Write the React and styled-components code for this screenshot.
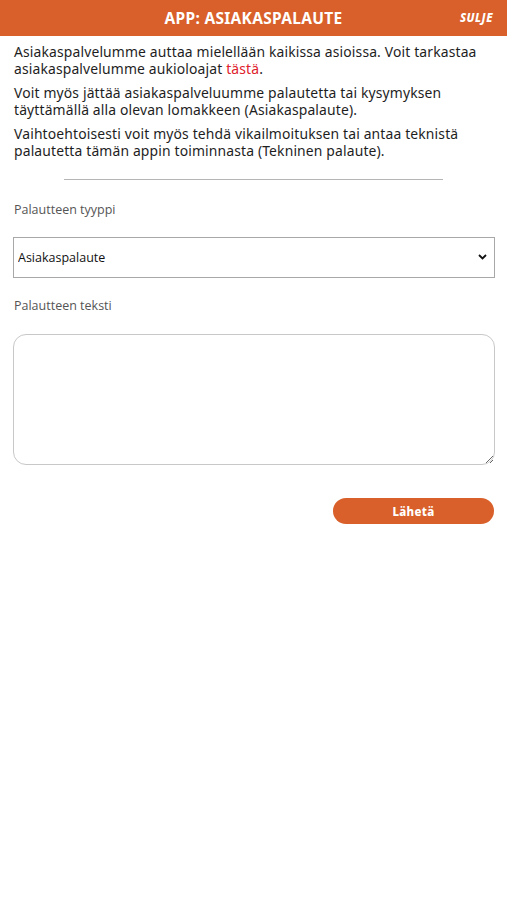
import React from 'react';
import styled, { createGlobalStyle } from 'styled-components';

const ORANGE = '#d9602a';

const GlobalStyle = createGlobalStyle`
  html, body {
    margin: 0;
    padding: 0;
    background: #fff;
  }
  * {
    box-sizing: border-box;
  }
`;

const Page = styled.div`
  width: 507px;
  min-height: 900px;
  background: #fff;
  font-family: 'Noto Sans', 'Open Sans', sans-serif;
`;

const Header = styled.header`
  position: relative;
  height: 36px;
  background: ${ORANGE};
  display: flex;
  align-items: center;
  justify-content: center;
`;

const Title = styled.h1`
  margin: 0;
  color: #fff;
  font-size: 15.5px;
  font-weight: 700;
  letter-spacing: 0.3px;
`;

const CloseButton = styled.button`
  position: absolute;
  right: 14px;
  top: 10px;
  border: 0;
  background: none;
  padding: 0;
  color: #fff;
  font-family: inherit;
  font-size: 11.5px;
  font-weight: 800;
  font-style: italic;
  letter-spacing: 0.5px;
  cursor: pointer;
`;

const Content = styled.main`
  padding: 7px 13px 0 14px;
`;

const Paragraph = styled.p`
  margin: 0 0 7px;
  font-size: 13.9px;
  letter-spacing: 0.15px;
  line-height: 17px;
  color: #1e1e1e;
`;

const Link = styled.a`
  color: #e0202a;
  text-decoration: none;
`;

const Divider = styled.hr`
  width: 379px;
  margin: 20px auto 0 50px;
  border: 0;
  border-top: 1px solid #b5b5b5;
`;

const Field = styled.div`
  display: flex;
  flex-direction: column;
`;

const Label = styled.label`
  font-family: 'Open Sans', 'Noto Sans', sans-serif;
  font-size: 12.5px;
  color: #555;
  margin: ${(p) => p.top}px 0 0;
  line-height: 17px;
`;

const SelectWrap = styled.div`
  position: relative;
  margin-top: 19px;
  width: 482px;
  margin-left: -1px;
`;

const Select = styled.select`
  appearance: none;
  width: 100%;
  height: 41px;
  border: 1px solid #a8a8a8;
  border-radius: 0;
  background: #fff;
  padding: 0 4px;
  font-family: 'Open Sans', 'Noto Sans', sans-serif;
  font-size: 12.5px;
  color: #111;
`;

const Chevron = styled.svg`
  position: absolute;
  right: 8px;
  top: 17px;
  pointer-events: none;
`;

const TextArea = styled.textarea`
  display: block;
  margin-top: 20px;
  margin-left: -1px;
  width: 482px;
  height: 131px;
  border: 1px solid #c8c8c8;
  border-radius: 13px;
  resize: vertical;
  font-family: inherit;
  outline: none;
`;

const Actions = styled.div`
  display: flex;
  justify-content: flex-end;
  margin-top: 33px;
`;

const SubmitButton = styled.button`
  width: 161px;
  height: 26px;
  border: 0;
  border-radius: 13px;
  background: ${ORANGE};
  color: #fff;
  font-family: 'Noto Sans', sans-serif;
  font-size: 11.5px;
  font-weight: 800;
  letter-spacing: 0.3px;
  cursor: pointer;
`;

export default function App() {
  return (
    <Page>
      <GlobalStyle />
      <Header>
        <Title>APP: ASIAKASPALAUTE</Title>
        <CloseButton>SULJE</CloseButton>
      </Header>
      <Content>
        <Paragraph>
          Asiakaspalvelumme auttaa mielellään kaikissa asioissa. Voit tarkastaa
          asiakaspalvelumme aukioloajat <Link href="#">tästä</Link>.
        </Paragraph>
        <Paragraph>
          Voit myös jättää asiakaspalveluumme palautetta tai kysymyksen
          täyttämällä alla olevan lomakkeen (Asiakaspalaute).
        </Paragraph>
        <Paragraph>
          Vaihtoehtoisesti voit myös tehdä vikailmoituksen tai antaa teknistä
          palautetta tämän appin toiminnasta (Tekninen palaute).
        </Paragraph>
        <Divider />
        <Field>
          <Label top={21}>Palautteen tyyppi</Label>
          <SelectWrap>
            <Select defaultValue="asiakaspalaute">
              <option value="asiakaspalaute">Asiakaspalaute</option>
              <option value="tekninen">Tekninen palaute</option>
            </Select>
            <Chevron width="9" height="6" viewBox="0 0 9 6">
              <path d="M1 1l3.5 3.5L8 1" fill="none" stroke="#111" strokeWidth="1.8" />
            </Chevron>
          </SelectWrap>
        </Field>
        <Field>
          <Label top={19}>Palautteen teksti</Label>
          <TextArea />
        </Field>
        <Actions>
          <SubmitButton>Lähetä</SubmitButton>
        </Actions>
      </Content>
    </Page>
  );
}
